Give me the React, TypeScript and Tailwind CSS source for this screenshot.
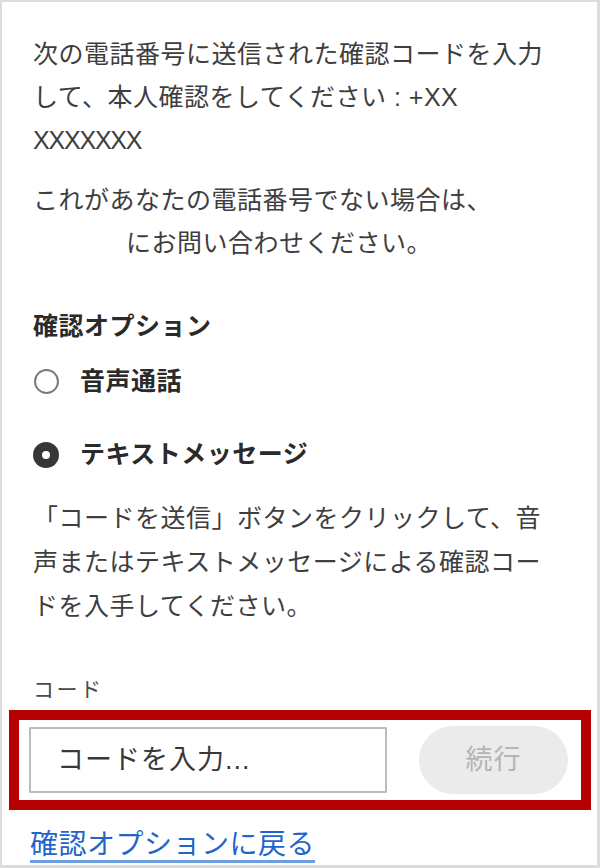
import { useState } from 'react';

const options = [
  { id: 'voice', label: '音声通話' },
  { id: 'sms', label: 'テキストメッセージ' },
];

const App = () => {
  const [selected, setSelected] = useState('sms');
  const [code, setCode] = useState('');

  return (
    <div className="w-[600px] h-[868px] overflow-hidden bg-white border-t-2 border-l-2 border-r-[3px] border-b-[3px] border-[#dcdcdc] font-['Liberation_Sans','Noto_Sans_CJK_JP',sans-serif]">
      <div className="flex flex-col pl-[7px] pr-[6px] pt-[31px]">
        {/* Intro */}
        <div className="pl-[24px] text-[25px] leading-[43px] tracking-[0.5px] text-[#3e3e3e]">
          <p>
            <span className="block whitespace-nowrap">次の電話番号に送信された確認コードを入力</span>
            <span className="block whitespace-nowrap">して、本人確認をしてください : +XX</span>
            <span className="block whitespace-nowrap tracking-[-1.2px]">XXXXXXX</span>
          </p>
          <p className="mt-[17px]">
            <span className="block whitespace-nowrap">これがあなたの電話番号でない場合は、</span>
            <span className="block whitespace-nowrap">
              <span className="inline-block w-[93px]"></span>にお問い合わせください。
            </span>
          </p>
        </div>

        {/* Options */}
        <div className="pl-[24px] mt-[40px]">
          <h2 className="text-[25px] leading-[43px] tracking-[0.5px] font-bold text-[#2a2a2a]">確認オプション</h2>
          {options.map((opt, i) => (
            <button
              key={opt.id}
              onClick={() => setSelected(opt.id)}
              className={`flex items-center gap-[21px] h-[43px] ${i === 0 ? 'mt-[12px]' : 'mt-[30px]'}`}
            >
              {selected === opt.id ? (
                <span className="w-[26px] h-[26px] rounded-full bg-[#363636] flex items-center justify-center">
                  <span className="w-[8px] h-[8px] rounded-full bg-white" />
                </span>
              ) : (
                <span className="w-[25px] h-[25px] ml-[1px] rounded-full border-2 border-[#7a7a7a] bg-white" />
              )}
              <span className="text-[25px] leading-[43px] tracking-[0.5px] font-bold text-[#2a2a2a]">{opt.label}</span>
            </button>
          ))}
          <p className="mt-[20px] text-[25px] leading-[44px] tracking-[0.5px] text-[#3e3e3e]">
            <span className="block whitespace-nowrap">「コードを送信」ボタンをクリックして、音</span>
            <span className="block whitespace-nowrap">声またはテキストメッセージによる確認コー</span>
            <span className="block whitespace-nowrap">ドを入手してください。</span>
          </p>
        </div>

        {/* Code entry */}
        <label className="pl-[24px] mt-[47px] text-[21px] leading-[30px] tracking-[2.5px] text-[#4a4a4a]">コード</label>
        <div className="mt-[5px] h-[100px] border-[10px] border-[#b40000] flex items-center pl-[10px] pr-[13px] gap-[32px]">
          <input
            value={code}
            onChange={(e) => setCode(e.target.value)}
            placeholder="コードを入力..."
            className="w-[358px] h-[66px] border-2 border-[#bdbdbd] shadow-[inset_0_0_1px_#e5e5e5] pl-[26px] text-[27px] tracking-[1px] text-[#333] placeholder:text-[#383838] outline-none"
          />
          <button
            disabled={!code}
            className="w-[149px] h-[68px] rounded-full bg-[#ebebeb] text-[27px] tracking-[1px] text-[#b4b4b8]"
          >
            続行
          </button>
        </div>

        <a
          href="#"
          className="self-start ml-[21px] mt-[17px] text-[28px] leading-[36px] tracking-[0.5px] text-[#1f66c8] underline decoration-[#6d9fe0] decoration-[3px] underline-offset-[6px]"
        >
          確認オプションに戻る
        </a>
      </div>
    </div>
  );
};

export default App;
